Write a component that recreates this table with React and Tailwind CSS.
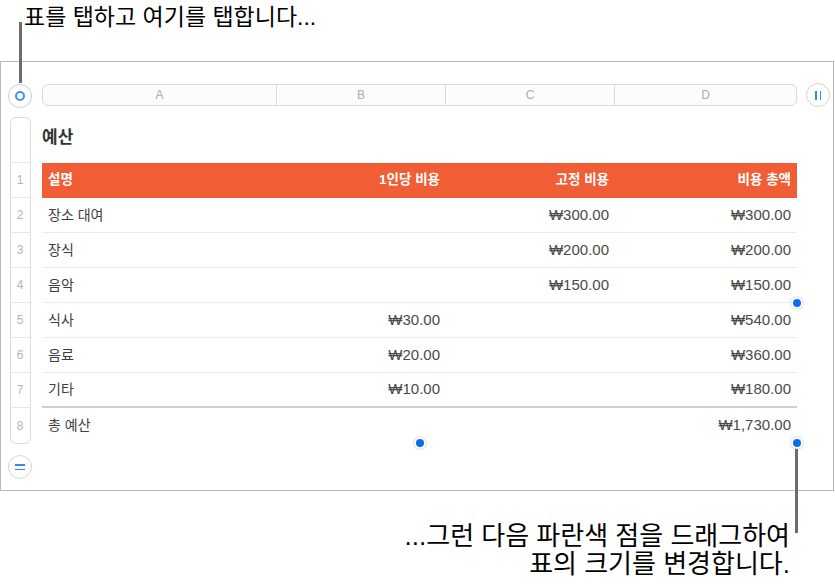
import React from "react";

const rows = [
  ["장소 대여", "", "₩300.00", "₩300.00"],
  ["장식", "", "₩200.00", "₩200.00"],
  ["음악", "", "₩150.00", "₩150.00"],
  ["식사", "₩30.00", "", "₩540.00"],
  ["음료", "₩20.00", "", "₩360.00"],
  ["기타", "₩10.00", "", "₩180.00"],
];

const font = { fontFamily: '"Liberation Sans", "Noto Sans CJK KR", sans-serif' };

function Dot({ className }) {
  return (
    <div
      className={`absolute w-[12px] h-[12px] rounded-full bg-white shadow-[0_0_2px_rgba(0,0,0,0.35)] flex items-center justify-center ${className}`}
    >
      <div className="w-[8px] h-[8px] rounded-full bg-[#0b6ee6]" />
    </div>
  );
}

export default function App() {
  return (
    <div
      className="relative w-[835px] h-[588px] bg-white overflow-hidden text-black"
      style={font}
    >
      {/* top caption */}
      <div className="h-[61px] pl-[24px] pt-[0px] text-[23px] leading-[34px] text-black">
        표를 탭하고 여기를 탭합니다...
      </div>

      {/* frame */}
      <div className="w-[834px] h-[430px] border border-[#b9b9b9] pt-[22px] pl-[7px]">
        {/* row 1 */}
        <div className="flex items-start">
          <div className="w-[24px] h-[24px] rounded-full border border-[#d4d4d4] bg-white shadow-[0_0_1px_rgba(0,0,0,0.1)] flex items-center justify-center">
            <div className="w-[10px] h-[10px] rounded-full border-2 border-[#3a95f2]" />
          </div>
          <div className="ml-[10px] w-[755px] h-[22px] rounded-[6px] border border-[#dadada] bg-[#fcfcfc] flex text-[12px] text-[#adadad] leading-[20px]">
            <div className="w-[234px] text-center border-r border-[#dadada]">A</div>
            <div className="w-[169px] text-center border-r border-[#dadada]">B</div>
            <div className="w-[169px] text-center border-r border-[#dadada]">C</div>
            <div className="flex-1 text-center">D</div>
          </div>
          <div className="ml-[9px] -mt-[1px] w-[24px] h-[24px] rounded-full border border-[#d4d4d4] bg-white flex items-center justify-center gap-[3px]">
            <div className="w-[1.5px] h-[9px] bg-[#2d8df2]" />
            <div className="w-[1.5px] h-[9px] bg-[#2d8df2]" />
          </div>
        </div>

        {/* row 2 */}
        <div className="flex mt-[9px]">
          <div className="w-[24px] flex justify-center">
            <div className="w-[21px] rounded-[6px] border border-[#dcdcdc] bg-white flex flex-col text-[12px] text-[#b5b5b5]">
              <div className="h-[45px] border-b border-[#e6e6e6]" />
              {[1, 2, 3, 4, 5, 6, 7, 8].map((n) => (
                <div
                  key={n}
                  className={`h-[35px] flex items-center justify-center ${n < 8 ? "border-b border-[#e6e6e6]" : ""}`}
                >
                  {n}
                </div>
              ))}
            </div>
          </div>
          <div className="ml-[10px] w-[755px]">
            <div className="h-[46px] pt-[9px] text-[17px] leading-[24px] font-bold text-[#333]">
              예산
            </div>
            <div className="flex h-[35px] bg-[#f15d35] text-white font-bold text-[13.5px] items-center">
              <div className="w-[234px] pl-[6px]">설명</div>
              <div className="w-[169px] pr-[5px] text-right">1인당 비용</div>
              <div className="w-[169px] pr-[5px] text-right">고정 비용</div>
              <div className="flex-1 pr-[6px] text-right">비용 총액</div>
            </div>
            {rows.map((r, i) => (
              <div
                key={i}
                className={`flex h-[35px] items-center text-[15px] text-[#4a4a4a] ${i === 5 ? "border-b-2 border-[#cfcfcf]" : "border-b border-[#ececec]"}`}
              >
                <div className="w-[234px] pl-[6px] text-[14px] text-[#3d3d3d]">{r[0]}</div>
                <div className="w-[169px] pr-[5px] text-right">{r[1]}</div>
                <div className="w-[169px] pr-[5px] text-right">{r[2]}</div>
                <div className="flex-1 pr-[6px] text-right">{r[3]}</div>
              </div>
            ))}
            <div className="flex h-[34px] items-center text-[15px] text-[#4a4a4a]">
              <div className="w-[234px] pl-[6px] text-[14px] text-[#3d3d3d]">총 예산</div>
              <div className="w-[169px]" />
              <div className="w-[169px]" />
              <div className="flex-1 pr-[6px] text-right">₩1,730.00</div>
            </div>
          </div>
        </div>

        {/* row 3 */}
        <div className="mt-[11px] w-[24px] h-[24px] rounded-full border border-[#d4d4d4] bg-white flex flex-col items-center justify-center gap-[3px]">
          <div className="w-[10px] h-[1.5px] bg-[#2d8df2]" />
          <div className="w-[10px] h-[1.5px] bg-[#2d8df2]" />
        </div>
      </div>

      {/* bottom caption */}
      <div className="pr-[45px] pt-[31px] text-right text-[26px] leading-[28px] text-black">
        <div>...그런 다음 파란색 점을 드래그하여</div>
        <div>표의 크기를 변경합니다.</div>
      </div>

      {/* callout lines */}
      <div className="absolute left-[19px] top-[22px] w-[3px] h-[61px] bg-[#6d6d6d]" />
      <div className="absolute left-[795px] top-[448px] w-[3px] h-[85px] bg-[#6d6d6d]" />

      {/* handles */}
      <Dot className="left-[791px] top-[297px]" />
      <Dot className="left-[414px] top-[437px]" />
      <Dot className="left-[791px] top-[437px]" />
    </div>
  );
}
